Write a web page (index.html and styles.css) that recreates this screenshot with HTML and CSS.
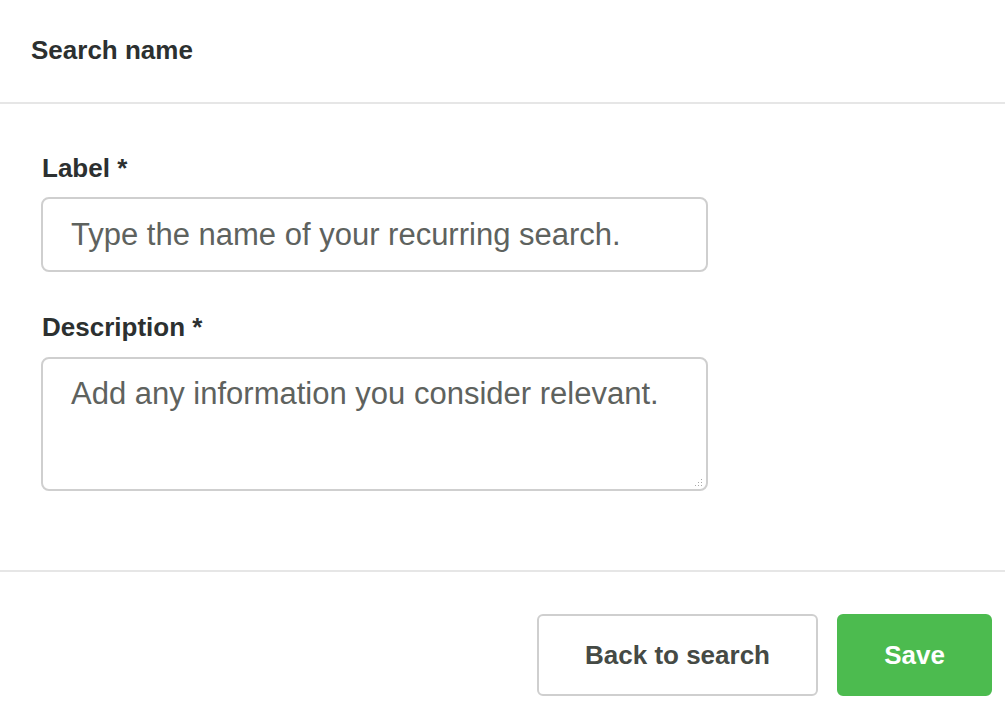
FILE: index.html
```html
<!DOCTYPE html>
<html lang="en">
<head>
<meta charset="utf-8">
<title>Search name</title>
<link rel="stylesheet" href="styles.css">
</head>
<body>
<div class="modal">
  <div class="modal-header">
    <h2 class="modal-title">Search name</h2>
  </div>
  <div class="modal-body">
    <div class="field">
      <label class="field-label" for="label">Label *</label>
      <input class="field-input" id="label" type="text" placeholder="Type the name of your recurring search.">
    </div>
    <div class="field">
      <label class="field-label field-label-area" for="desc">Description *</label>
      <div class="textarea-wrap">
        <textarea class="field-textarea" id="desc" placeholder="Add any information you consider relevant."></textarea>
        <svg class="grip" width="8" height="7" viewBox="0 0 8 7" aria-hidden="true">
          <rect x="6" y="0" width="1" height="1" fill="#a8a8a8"/>
          <rect x="3" y="3" width="1" height="1" fill="#a8a8a8"/>
          <rect x="6" y="3" width="1" height="1" fill="#a8a8a8"/>
          <rect x="0" y="6" width="1" height="1" fill="#a8a8a8"/>
          <rect x="3" y="6" width="1" height="1" fill="#a8a8a8"/>
          <rect x="6" y="6" width="1" height="1" fill="#a8a8a8"/>
        </svg>
      </div>
    </div>
  </div>
  <div class="modal-footer">
    <button class="btn btn-secondary" type="button">Back to search</button>
    <button class="btn btn-primary" type="button">Save</button>
  </div>
</div>
</body>
</html>
```
FILE: styles.css
```css
html, body {
  margin: 0;
  padding: 0;
  background: #ffffff;
}

body {
  font-family: "Liberation Sans", Arial, sans-serif;
  color: #2c3030;
}

.modal {
  width: 1005px;
  height: 710px;
  display: flex;
  flex-direction: column;
  overflow: hidden;
}

.modal-header {
  padding: 35px 31px 37px;
  border-bottom: 2px solid #e6e6e6;
}

.modal-title {
  margin: 0;
  font-size: 26px;
  line-height: 30px;
  font-weight: bold;
  color: #2c3030;
}

.modal-body {
  padding: 49px 41px 79px;
  display: flex;
  flex-direction: column;
  gap: 40px;
}

.field {
  display: flex;
  flex-direction: column;
  align-items: flex-start;
}

.field-label {
  display: block;
  font-size: 26px;
  line-height: 30px;
  font-weight: bold;
  color: #2c3030;
  margin-bottom: 14px;
  padding-left: 1px;
}

.field-label-area {
  margin-bottom: 15px;
}

.field-input,
.field-textarea {
  box-sizing: border-box;
  width: 667px;
  margin: 0;
  border: 2px solid #cfcfcf;
  border-radius: 8px;
  background: #ffffff;
  font-family: "Liberation Sans", Arial, sans-serif;
  font-size: 31px;
  color: #2c3030;
  outline: none;
}

.field-input {
  height: 75px;
  padding: 0 20px 0 28px;
}

.textarea-wrap {
  position: relative;
  display: flex;
}

.field-textarea {
  display: block;
  height: 134px;
  padding: 17px 20px 10px 28px;
  line-height: normal;
  resize: none;
}

.grip {
  position: absolute;
  right: 5px;
  bottom: 5px;
  display: block;
}

.field-input::placeholder,
.field-textarea::placeholder {
  color: #5e625e;
  opacity: 1;
}

.modal-footer {
  border-top: 2px solid #e6e6e6;
  padding: 42px 13px 14px;
  display: flex;
  justify-content: flex-end;
  gap: 19px;
}

.btn {
  box-sizing: border-box;
  height: 82px;
  margin: 0;
  border-radius: 6px;
  font-family: "Liberation Sans", Arial, sans-serif;
  font-size: 26px;
  font-weight: bold;
  cursor: pointer;
}

.btn-secondary {
  width: 281px;
  background: #ffffff;
  border: 2px solid #cfcfcf;
  color: #454a45;
}

.btn-primary {
  width: 155px;
  background: #4cbb4f;
  border: 2px solid #4cbb4f;
  color: #ffffff;
}
```
